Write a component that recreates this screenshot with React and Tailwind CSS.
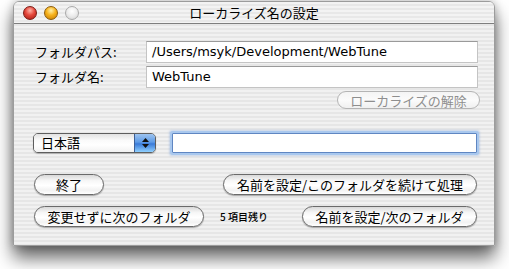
import React from "react";

const JP = "font-['Noto_Sans_CJK_JP','Noto_Sans',sans-serif]";
const LAT = "font-['DejaVu_Sans','Noto_Sans_CJK_JP',sans-serif]";

function AquaButton({ children, className = "", disabled = false }) {
  return (
    <div
      className={`rounded-full border flex items-center justify-center text-[13px] leading-none ${JP} ${
        disabled
          ? "border-[#b4b4b4] text-[#8e8e8e] bg-[linear-gradient(to_bottom,#f4f4f4_0%,#fbfbfb_50%,#f0f0f0_100%)]"
          : "border-[#6a6a6a] text-black bg-[linear-gradient(to_bottom,#d9d9d9_0%,#f7f7f7_30%,#ffffff_55%,#f2f2f2_80%,#ffffff_100%)] shadow-[0_1px_1px_rgba(0,0,0,0.3)]"
      } ${className}`}
    >
      {children}
    </div>
  );
}

function Light({ color }) {
  const map = {
    red: "bg-[radial-gradient(circle_at_50%_30%,#ffb3a8_0%,#e5483c_45%,#a51b12_100%)] border-[#7a1a14]",
    yellow: "bg-[radial-gradient(circle_at_50%_30%,#fff0a8_0%,#f7b21c_45%,#c27a05_100%)] border-[#8a5a0a]",
    gray: "bg-[radial-gradient(circle_at_50%_35%,#ffffff_0%,#ececec_50%,#cfcfcf_100%)] border-[#a9a9a9]",
  };
  return <div className={`w-[14px] h-[14px] rounded-full border ${map[color]}`} />;
}

export default function App() {
  return (
    <div className="w-[509px] h-[269px] bg-white overflow-hidden">
      <div className="ml-[13px] mt-[1px] w-[482px] h-[245px] rounded-t-[6px] border border-[#9c9c9c] overflow-hidden shadow-[0_12px_18px_rgba(0,0,0,0.6),0_0_8px_rgba(0,0,0,0.25)] bg-[repeating-linear-gradient(to_bottom,#f1f1f1_0px,#f1f1f1_2px,#e6e6e6_2px,#e6e6e6_4px)] flex flex-col">
        {/* title bar */}
        <div className="h-[22px] shrink-0 border-b border-[#7e7e7e] flex items-center relative bg-[repeating-linear-gradient(to_bottom,#f3f3f3_0px,#f3f3f3_2px,#e8e8e8_2px,#e8e8e8_4px)]">
          <div className="flex items-center gap-[7px] pl-[9px]">
            <Light color="red" />
            <Light color="yellow" />
            <Light color="gray" />
          </div>
          <div className={`absolute inset-0 flex items-center justify-center text-[13px] text-black ${JP}`}>
            ローカライズ名の設定
          </div>
        </div>

        {/* content */}
        <div className="flex flex-col pt-[17px]">
          <div className="flex items-center h-[22px]">
            <div className={`w-[132px] pl-[21px] text-[13px] text-black ${JP}`}>フォルダパス:</div>
            <div className={`w-[332px] h-[22px] bg-white border border-[#c4c4c4] border-t-[#9a9a9a] flex items-center pl-[5px] text-[13px] text-black ${LAT}`}>
              /Users/msyk/Development/WebTune
            </div>
          </div>
          <div className="flex items-center h-[22px] mt-[3px]">
            <div className={`w-[132px] pl-[21px] text-[13px] text-black ${JP}`}>フォルダ名:</div>
            <div className={`w-[332px] h-[22px] bg-white border border-[#c4c4c4] border-t-[#9a9a9a] flex items-center pl-[5px] text-[13px] text-black ${LAT}`}>
              WebTune
            </div>
          </div>
          <div className="flex justify-end mt-[3px] pr-[14px]">
            <AquaButton disabled className="w-[143px] h-[18px]">
              ローカライズの解除
            </AquaButton>
          </div>

          <div className="flex items-center mt-[24px] h-[20px]">
            <div className="ml-[19px] w-[123px] h-[20px] rounded-[5px] border border-[#5e5e5e] flex overflow-hidden shadow-[0_1px_1px_rgba(0,0,0,0.25)]">
              <div className={`flex-1 flex items-center pl-[7px] text-[13px] text-black bg-[linear-gradient(to_bottom,#e2e2e2_0%,#fafafa_35%,#ffffff_60%,#f2f2f2_100%)] ${JP}`}>
                日本語
              </div>
              <div className="w-[21px] border-l border-[#3d5f96] flex flex-col items-center justify-center gap-[2px] bg-[linear-gradient(to_bottom,#9ec4f0_0%,#5e9be6_45%,#3a7ad8_55%,#8fd0ff_100%)]">
                <svg width="7" height="4" viewBox="0 0 7 4"><path d="M3.5 0L7 4H0z" fill="#111" /></svg>
                <svg width="7" height="4" viewBox="0 0 7 4"><path d="M0 0h7L3.5 4z" fill="#111" /></svg>
              </div>
            </div>
            <div className="ml-[16px] w-[305px] h-[20px] bg-white border border-[#5f86c2] rounded-[1px] shadow-[0_0_0_2px_#a9c8ee,0_0_2px_3px_rgba(120,160,220,0.35)]" />
          </div>

          <div className="flex items-center mt-[21px] h-[21px] pl-[20px]">
            <AquaButton className="w-[70px] h-[21px]">終了</AquaButton>
            <AquaButton className="ml-[119px] w-[254px] h-[21px]">名前を設定/このフォルダを続けて処理</AquaButton>
          </div>
          <div className="flex items-center mt-[11px] h-[21px] pl-[20px]">
            <AquaButton className="w-[170px] h-[21px]">変更せずに次のフォルダ</AquaButton>
            <div className={`ml-[16px] text-[10px] font-medium text-black ${JP}`}>5 項目残り</div>
            <AquaButton className="ml-auto mr-[17px] w-[175px] h-[21px]">名前を設定/次のフォルダ</AquaButton>
          </div>
        </div>
      </div>
    </div>
  );
}
